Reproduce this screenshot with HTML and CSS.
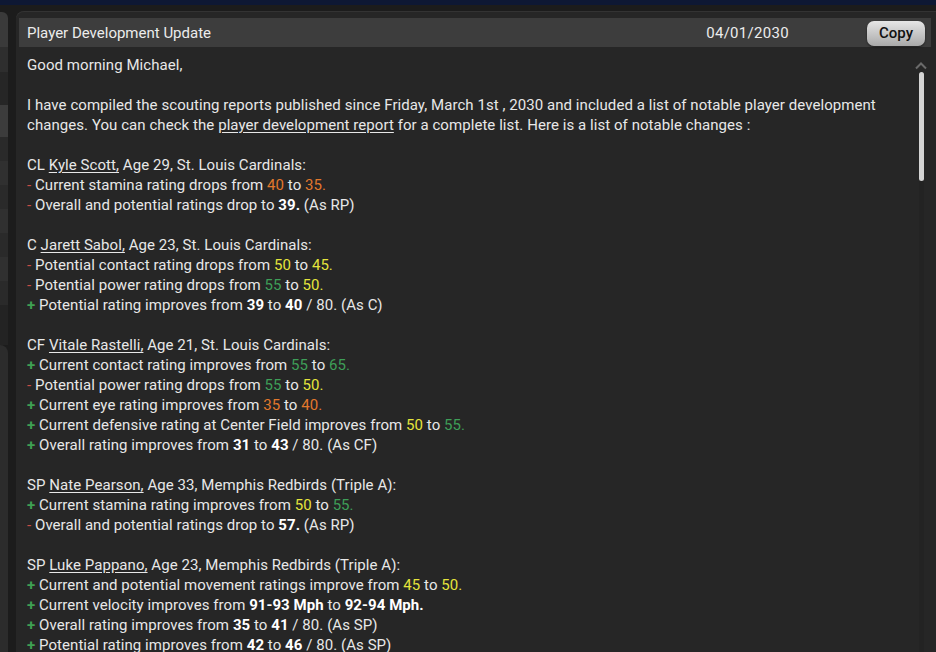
FILE: index.html
```html
<!DOCTYPE html>
<html>
<head>
<meta charset="utf-8">
<link rel="stylesheet" href="styles.css">
</head>
<body>
<div class="topbar"></div>
<div class="main">
  <div class="side">
    <div class="s s1"></div><div class="s s2"></div><div class="s s3"></div><div class="s s4"></div>
    <div class="s s5"></div><div class="s s6"></div><div class="s s5"></div><div class="s s6"></div>
    <div class="s s5"></div><div class="s s6"></div><div class="s s5"></div><div class="s s7"></div>
    <div class="s s8"></div>
  </div>
  <div class="panel">
    <div class="header">
      <span class="title">Player Development Update</span>
      <span class="date">04/01/2030</span>
      <button class="copy">Copy</button>
    </div>
    <div class="body">
      <div class="text">
        <p>Good morning Michael,</p>
        <p class="blank"></p>
        <p>I have compiled the scouting reports published since Friday, March 1st , 2030 and included a list of notable player development changes. You can check the <u>player development report</u> for a complete list. Here is a list of notable changes :</p>
        <p class="blank"></p>
        <p>CL <u>Kyle Scott,</u> Age 29, St. Louis Cardinals:</p>
        <p><span class="m">-</span> Current stamina rating drops from <span class="o">40</span> to <span class="o">35.</span></p>
        <p><span class="m">-</span> Overall and potential ratings drop to <b>39.</b> (As RP)</p>
        <p class="blank"></p>
        <p>C <u>Jarett Sabol,</u> Age 23, St. Louis Cardinals:</p>
        <p><span class="m">-</span> Potential contact rating drops from <span class="y">50</span> to <span class="y">45.</span></p>
        <p><span class="m">-</span> Potential power rating drops from <span class="g">55</span> to <span class="y">50.</span></p>
        <p><span class="p">+</span> Potential rating improves from <b>39</b> to <b>40</b> / 80. (As C)</p>
        <p class="blank"></p>
        <p>CF <u>Vitale Rastelli,</u> Age 21, St. Louis Cardinals:</p>
        <p><span class="p">+</span> Current contact rating improves from <span class="g">55</span> to <span class="g">65.</span></p>
        <p><span class="m">-</span> Potential power rating drops from <span class="g">55</span> to <span class="y">50.</span></p>
        <p><span class="p">+</span> Current eye rating improves from <span class="o">35</span> to <span class="o">40.</span></p>
        <p><span class="p">+</span> Current defensive rating at Center Field improves from <span class="y">50</span> to <span class="g">55.</span></p>
        <p><span class="p">+</span> Overall rating improves from <b>31</b> to <b>43</b> / 80. (As CF)</p>
        <p class="blank"></p>
        <p>SP <u>Nate Pearson,</u> Age 33, Memphis Redbirds (Triple A):</p>
        <p><span class="p">+</span> Current stamina rating improves from <span class="y">50</span> to <span class="g">55.</span></p>
        <p><span class="m">-</span> Overall and potential ratings drop to <b>57.</b> (As RP)</p>
        <p class="blank"></p>
        <p>SP <u>Luke Pappano,</u> Age 23, Memphis Redbirds (Triple A):</p>
        <p><span class="p">+</span> Current and potential movement ratings improve from <span class="y">45</span> to <span class="y">50.</span></p>
        <p><span class="p">+</span> Current velocity improves from <b>91-93 Mph</b> to <b>92-94 Mph.</b></p>
        <p><span class="p">+</span> Overall rating improves from <b>35</b> to <b>41</b> / 80. (As SP)</p>
        <p><span class="p">+</span> Potential rating improves from <b>42</b> to <b>46</b> / 80. (As SP)</p>
      </div>
      <div class="scroll">
        <svg class="up" width="14" height="9" viewBox="0 0 14 9"><path d="M2 7.5 L7 2.5 L12 7.5" fill="none" stroke="#6a6a6a" stroke-width="2"/></svg>
        <div class="thumb"></div>
        <div class="track"></div>
      </div>
    </div>
  </div>
</div>
</body>
</html>
```

FILE: styles.css
```css
* { box-sizing: border-box; }
html, body { margin: 0; padding: 0; }
body {
  width: 936px;
  height: 652px;
  overflow: hidden;
  background: #1c1c1c;
  font-family: Roboto, "Liberation Sans", sans-serif;
  display: flex;
  flex-direction: column;
}
.topbar {
  height: 5px;
  background: #0e1834;
  flex: none;
}
.main {
  flex: 1;
  display: flex;
  gap: 8px;
  min-height: 0;
}
.side {
  width: 8px;
  flex: none;
  display: flex;
  flex-direction: column;
  padding-top: 7px;
}
.s { flex: none; }
.s1 { height: 35px; background: #3a3a3a; border-radius: 0 6px 0 0; }
.s2 { height: 25px; background: #2e2e2e; }
.s3 { height: 33px; background: #262626; }
.s4 { height: 32px; background: #3c3c3c; }
.s5 { height: 24px; background: #2a2a2a; }
.s6 { height: 24px; background: #303030; }
.s7 { height: 40px; background: #232323; }
.s8 { flex: 1; background: #2c2c2c; border-radius: 0 10px 0 0; }
.panel {
  flex: 1;
  margin-top: 6px;
  background: #262626;
  border-radius: 8px 0 0 0;
  display: flex;
  flex-direction: column;
  min-width: 0;
  box-shadow: inset 0 1px 0 #333;
}
.header {
  margin: 7px 5px 0 3px;
  height: 29px;
  background: #3d3d3d;
  display: flex;
  align-items: center;
  padding: 1px 6px 0 8px;
  color: #ececec;
  font-size: 15px;
}
.title { flex: 1; }
.date { margin-right: 78px; letter-spacing: 0.3px; }
.copy {
  width: 58px;
  height: 25px;
  border: none;
  border-radius: 7px;
  background: linear-gradient(#e6e6e6, #a9a9a9);
  font-family: Roboto, "Liberation Sans", sans-serif;
  font-size: 15px;
  font-weight: 500;
  color: #111;
  padding: 0;
  box-shadow: 0 1px 2px rgba(0,0,0,0.5);
}
.body {
  flex: 1;
  display: flex;
  min-height: 0;
  overflow: hidden;
}
.text {
  flex: 1;
  padding: 8px 0 0 11px;
  color: #e8e8e8;
  font-size: 15px;
  line-height: 20px;
  letter-spacing: 0.06px;
}
.text p { margin: 0; }
.text p.blank { height: 20px; }
.text u { text-decoration: underline; text-underline-offset: 2px; }
.text b { font-weight: 700; color: #fff; }
.m { color: #c84c44; }
.p { color: #3fa052; font-weight: 700; }
.o { color: #e2782c; }
.y { color: #e4e43c; }
.g { color: #3e9e58; }
.scroll {
  width: 24px;
  flex: none;
  display: flex;
  flex-direction: column;
  align-items: center;
  padding-top: 14px;
  padding-right: 6px;
}
.up { display: block; }
.thumb {
  margin-top: 2px;
  width: 5px;
  height: 109px;
  background: #d4d4d4;
  border-radius: 3px;
}
.track {
  flex: 1;
  width: 5px;
  background: #232323;
}
```
